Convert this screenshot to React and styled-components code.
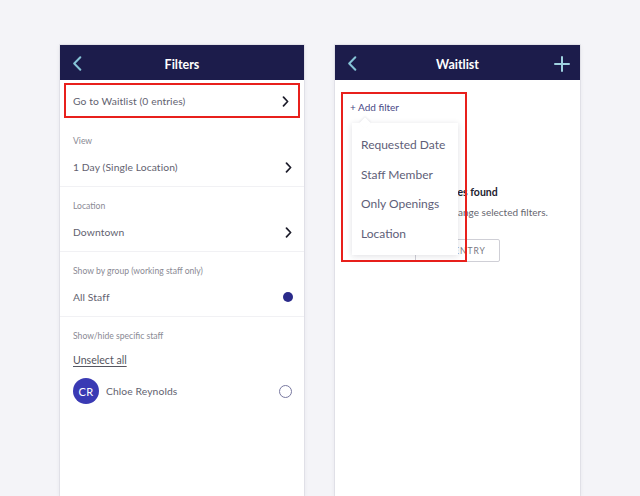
import React from "react";
import styled, { createGlobalStyle } from "styled-components";

const Global = createGlobalStyle`
  html, body { margin: 0; padding: 0; background: #f4f4f8; }
  body { font-family: Lato, "Noto Sans", sans-serif; -webkit-font-smoothing: antialiased; }
  * { box-sizing: border-box; }
`;

const Page = styled.div`
  display: flex;
  gap: 31px;
  padding: 45px 0 0 60px;
  height: 496px;
  overflow: hidden;
`;

const Panel = styled.div`
  position: relative;
  width: ${(p) => p.$w}px;
  height: 451px;
  background: #fff;
  box-shadow: 0 0 0 1px rgba(30, 30, 70, 0.06), 0 1px 5px rgba(30, 30, 70, 0.08);
  display: flex;
  flex-direction: column;
`;

const Header = styled.div`
  height: 35px;
  flex: none;
  background: #1c1c4b;
  display: grid;
  grid-template-columns: 40px 1fr 40px;
  align-items: center;
`;

const Title = styled.div`
  text-align: center;
  color: #fff;
  font-weight: 700;
  font-size: 12.5px;
  margin-top: 3px;
`;

const HeaderIcon = styled.div`
  display: flex;
  align-items: center;
  justify-content: ${(p) => p.$align || "center"};
  padding-left: ${(p) => p.$pl || 0}px;
  padding-right: ${(p) => p.$pr || 0}px;
  margin-top: 2px;
`;

const BackIcon = () => (
  <svg width="10" height="15" viewBox="0 0 10 15">
    <path d="M8.3 1.2 L2.2 7.5 L8.3 13.8" fill="none" stroke="#86c3d6" strokeWidth="2" strokeLinecap="round" strokeLinejoin="round" />
  </svg>
);

const PlusIcon = () => (
  <svg width="16" height="16" viewBox="0 0 16 16">
    <path d="M8 1 V15 M1 8 H15" fill="none" stroke="#9fd2e0" strokeWidth="2" strokeLinecap="round" />
  </svg>
);

const Chevron = () => (
  <svg width="7" height="11" viewBox="0 0 7 11">
    <path d="M1.5 1.2 L5.6 5.5 L1.5 9.8" fill="none" stroke="#1d1d2b" strokeWidth="1.7" strokeLinecap="round" strokeLinejoin="round" />
  </svg>
);

const WaitlistWrap = styled.div`
  padding: 3px 4px 4px;
`;

const Highlight = styled.div`
  height: 35px;
  border: 2px solid #e8201c;
  display: flex;
  align-items: center;
  justify-content: space-between;
  padding: 1px 9px 0 7px;
`;

const ValueText = styled.span`
  font-size: 10.3px;
  color: #62626f;
  letter-spacing: 0.1px;
`;

const Section = styled.div`
  padding: 12px 13px 0;
  border-bottom: ${(p) => (p.$last ? "none" : "1.5px solid #f1f1f4")};
`;

const Label = styled.div`
  font-size: 8.6px;
  line-height: 14px;
  color: #8a8a94;
`;

const ValueRow = styled.div`
  height: 38px;
  display: flex;
  align-items: center;
  justify-content: space-between;
  margin-right: -1px;
`;

const Dot = styled.span`
  width: 10px;
  height: 10px;
  border-radius: 50%;
  background: #2a2a8a;
  margin-right: -1px;
`;

const LinkText = styled.div`
  margin-top: 10px;
  font-size: 10.6px;
  line-height: 14px;
  color: #55555f;
  text-decoration: underline;
  text-underline-offset: 2px;
`;

const StaffRow = styled.div`
  margin-top: 11px;
  height: 26px;
  display: flex;
  align-items: center;
  gap: 7px;
`;

const Avatar = styled.div`
  width: 26px;
  height: 26px;
  border-radius: 50%;
  background: #3a3ab4;
  color: #fff;
  font-size: 11px;
  display: flex;
  align-items: center;
  justify-content: center;
  letter-spacing: 0.3px;
`;

const Radio = styled.span`
  margin-left: auto;
  margin-right: -1px;
  width: 13px;
  height: 13px;
  border-radius: 50%;
  border: 1px solid #7878a0;
`;

const Body = styled.div`
  position: relative;
  flex: 1;
`;

const EmptyState = styled.div`
  padding: 105px 0 0 80px;
  display: flex;
  flex-direction: column;
  align-items: flex-start;
`;

const EmptyTitle = styled.div`
  padding-left: 4px;
  font-size: 10.5px;
  line-height: 14px;
  font-weight: 700;
  color: #222230;
`;

const EmptySub = styled.div`
  padding-left: 5px;
  margin-top: 6px;
  font-size: 10px;
  line-height: 14px;
  color: #66666f;
`;

const OutlineButton = styled.div`
  margin-top: 20px;
  width: 85px;
  height: 23px;
  border: 1px solid #cfcfd6;
  border-radius: 2px;
  display: flex;
  align-items: center;
  justify-content: center;
  font-size: 8.5px;
  letter-spacing: 1px;
  color: #77777f;
`;

const FilterAnnotation = styled.div`
  position: absolute;
  left: 6px;
  top: 12px;
  width: 126px;
  height: 170px;
  border: 2px solid #e8201c;
  padding: 6px 0 0 7px;
`;

const AddFilter = styled.div`
  font-size: 10px;
  line-height: 14px;
  color: #4a4a86;
`;

const Menu = styled.div`
  position: relative;
  margin-top: 9px;
  margin-left: 2px;
  width: 106px;
  height: 132px;
  background: #fff;
  box-shadow: 0 1px 6px rgba(30, 30, 60, 0.14);
  padding-top: 7px;
  &::before {
    content: "";
    position: absolute;
    top: -4px;
    left: 9px;
    width: 8px;
    height: 8px;
    background: #fff;
    transform: rotate(45deg);
    box-shadow: -1px -1px 2px rgba(30, 30, 60, 0.08);
  }
`;

const MenuItem = styled.div`
  position: relative;
  height: 29.6px;
  display: flex;
  align-items: center;
  padding-left: 9px;
  font-size: 12px;
  color: #5e5e78;
`;

export default function App() {
  return (
    <>
      <Global />
      <Page>
        <Panel $w={244}>
          <Header>
            <HeaderIcon $align="flex-start" $pl={12}><BackIcon /></HeaderIcon>
            <Title>Filters</Title>
            <div />
          </Header>
          <WaitlistWrap>
            <Highlight>
              <ValueText>Go to Waitlist (0 entries)</ValueText>
              <Chevron />
            </Highlight>
          </WaitlistWrap>
          <Section>
            <Label>View</Label>
            <ValueRow>
              <ValueText>1 Day (Single Location)</ValueText>
              <Chevron />
            </ValueRow>
          </Section>
          <Section>
            <Label>Location</Label>
            <ValueRow>
              <ValueText>Downtown</ValueText>
              <Chevron />
            </ValueRow>
          </Section>
          <Section>
            <Label>Show by group (working staff only)</Label>
            <ValueRow>
              <ValueText>All Staff</ValueText>
              <Dot />
            </ValueRow>
          </Section>
          <Section $last>
            <Label>Show/hide specific staff</Label>
            <LinkText>Unselect all</LinkText>
            <StaffRow>
              <Avatar>CR</Avatar>
              <ValueText>Chloe Reynolds</ValueText>
              <Radio />
            </StaffRow>
          </Section>
        </Panel>
        <Panel $w={245}>
          <Header>
            <HeaderIcon $align="flex-start" $pl={12}><BackIcon /></HeaderIcon>
            <Title>Waitlist</Title>
            <HeaderIcon $align="flex-end" $pr={10}><PlusIcon /></HeaderIcon>
          </Header>
          <Body>
            <EmptyState>
              <EmptyTitle>No entries found</EmptyTitle>
              <EmptySub>Try to change selected filters.</EmptySub>
              <OutlineButton>ADD ENTRY</OutlineButton>
            </EmptyState>
            <FilterAnnotation>
              <AddFilter>+ Add filter</AddFilter>
              <Menu>
                <MenuItem>Requested Date</MenuItem>
                <MenuItem>Staff Member</MenuItem>
                <MenuItem>Only Openings</MenuItem>
                <MenuItem>Location</MenuItem>
              </Menu>
            </FilterAnnotation>
          </Body>
        </Panel>
      </Page>
    </>
  );
}
